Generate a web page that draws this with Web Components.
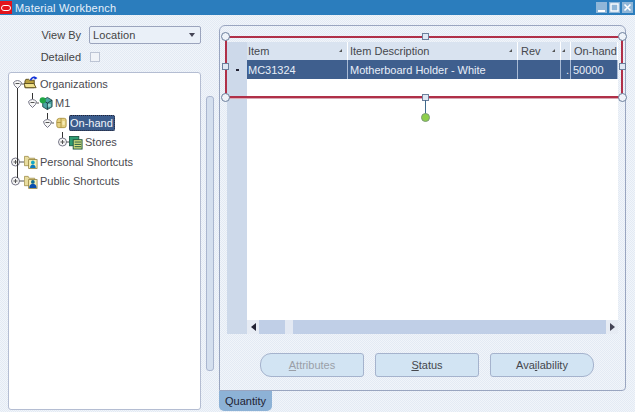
<!DOCTYPE html>
<html lang="en">
<head>
<meta charset="UTF-8">
<title>Material Workbench</title>
<style>
  html, body { margin: 0; background: #fff; }
  body { font: 11px "Liberation Sans", Arial, sans-serif; color: #444; }
</style>
</head>
<body>
<app-window>
  <title-bar slot="title">Material Workbench</title-bar>
  <side-pane slot="left"></side-pane>
  <tab-panel slot="right">
    <data-table></data-table>
    <button-row slot="buttons">
      <push-button shape="left" disabled><u>A</u>ttributes</push-button>
      <push-button><u>S</u>tatus</push-button>
      <push-button shape="right">Ava<u>i</u>lability</push-button>
    </button-row>
  </tab-panel>
</app-window>

<script>
  const DITHER = `background-color:#e9eff7;background-image:
    repeating-conic-gradient(#f1f5fa 0 25%, #e3eaf4 0 50%);background-size:2px 2px;`

  customElements.define("app-window", class extends HTMLElement {
    connectedCallback() {
      this.attachShadow({ mode: "open" }).innerHTML = `<style>
        :host { display: flex; flex-direction: column; width: 635px; height: 412px; ${DITHER} }
        .main { display: flex; flex: 1; min-height: 0; }
      </style>
      <slot name="title"></slot>
      <div class="main"><slot name="left"></slot><slot name="right"></slot></div>`
    }
  })

  customElements.define("title-bar", class extends HTMLElement {
    connectedCallback() {
      this.attachShadow({ mode: "open" }).innerHTML = `<style>
        :host { display: flex; align-items: center; height: 15px; background: #2b7dbd; color: #e6f0fa; font-size: 11px; }
        .logo { width: 12px; height: 13px; background: #e2141c; display: flex; align-items: center; justify-content: center; margin-right: 3px; }
        .logo i { width: 8px; height: 4px; border: 1px solid #fff; border-radius: 3px; }
        .text { flex: 1; letter-spacing: .2px; }
        .btns { display: flex; gap: 2px; margin-right: 2px; }
        .btns svg { display: block; }
      </style>
      <div class="logo"><i></i></div>
      <div class="text"><slot></slot></div>
      <div class="btns">
        <svg width="11" height="11"><rect width="11" height="11" fill="#8fb6d8"/><rect x="2" y="8" width="7" height="2" fill="#fff"/></svg>
        <svg width="11" height="11"><rect width="11" height="11" fill="#8fb6d8"/><rect x="2" y="2" width="7" height="7" fill="none" stroke="#fff" stroke-width="1.4"/></svg>
        <svg width="11" height="11"><rect width="11" height="11" fill="#8fb6d8"/><path d="M2.5 2.5l6 6M8.5 2.5l-6 6" stroke="#fff" stroke-width="1.6"/></svg>
      </div>`
    }
  })

  customElements.define("side-pane", class extends HTMLElement {
    connectedCallback() {
      this.attachShadow({ mode: "open" }).innerHTML = `<style>
        :host { display: block; width: 219px; flex: none; padding: 11px 0 2px 8px; box-sizing: border-box; }
        .form { display: grid; grid-template-columns: 73px 112px; column-gap: 8px; row-gap: 7px; align-items: center; height: 46px; align-content: start; }
        label { text-align: right; color: #444; }
        .select { height: 18px; box-sizing: border-box; border: 1px solid #9ba4bd; border-radius: 2px; background: #eaf0f8;
          display: flex; align-items: center; justify-content: space-between; padding: 0 5px 0 3px; letter-spacing: .1px; }
        .select::after { content: ""; border: 3.5px solid transparent; border-top: 4px solid #445; border-bottom: 0; }
        .check { width: 8px; height: 8px; border: 1px solid #bcc4d4; background: #f0f3f8; margin-left: 1px; }
        .row { display: flex; height: 338px; gap: 5px; }
        .tree { width: 193px; box-sizing: border-box; background: #fff; border: 1px solid #b4bdd2; border-radius: 3px; }
        .scroll { width: 6px; margin-top: 24px; height: 273px; background: #d4dfee; border: 1px solid #aab6cf; border-radius: 3px; }
      </style>
      <div class="form">
        <label>View By</label><div class="select">Location</div>
        <label>Detailed</label><div class="check"></div>
      </div>
      <div class="row">
        <div class="tree"><tree-view></tree-view></div>
        <div class="scroll"></div>
      </div>`
    }
  })

  const ICONS = {
    orgs: `<path d="M1 5l1-2h3l1 1h5v8H1z" fill="#b89f3e" stroke="#4f4214" stroke-width=".9"/><path d="M0 7.500h10.500l2.500 4.500H1.500z" fill="#efe08c" stroke="#4f4214" stroke-width=".9"/><path d="M7 4c1-3 4-4 6-2" fill="none" stroke="#1233d8" stroke-width="1.7"/><path d="M10.500 0l4 1.500-3 2z" fill="#1233d8"/>`,
    cube: `<path d="M4 4l5-3 5 3v7l-5 3-5-3z" fill="#4aa5a3" stroke="#173f40" stroke-width=".9"/><path d="M4 4l5 3 5-3M9 7v7" fill="none" stroke="#123234" stroke-width=".9"/><rect x="9.500" y="8" width="3" height="3" fill="#9ad6d0"/><circle cx="4" cy="4" r="3.300" fill="#1fa644"/>`,
    box: `<path d="M3 6q0-3 3-3h5q2 0 2 2v6q0 2-2 2H5q-2 0-2-2z" fill="#e6d183" stroke="#a88f3c" stroke-width=".9"/><path d="M7.500 3v10M3 7.500h4.500" stroke="#a88f3c" stroke-width=".9"/><path d="M9 6h2.500v4H9z" fill="#f6edb8"/>`,
    stores: `<rect x="0.500" y="1" width="10" height="10" fill="#2f9c72" stroke="#17513f" stroke-width=".9"/><rect x="4.500" y="4.500" width="9.500" height="10" fill="#d4e07e" stroke="#17513f"/><path d="M6 7h7M6 9.500h7M6 12h7" stroke="#17513f"/>`,
    personal: `<path d="M0.500 5V2h4l1 2h6v8H0.500z" fill="#e8dc9e" stroke="#9a8a45" stroke-width=".8"/><rect x="5" y="5.500" width="9" height="9.500" fill="#f6efb4" stroke="#8c7a35" stroke-width=".8"/><circle cx="9.500" cy="8.500" r="2" fill="#12a8c8"/><path d="M6.500 14.500c0-5 6-5 6 0z" fill="#0e7cc0"/>`,
    pub: `<path d="M0.500 5V2h4l1 2h6v8H0.500z" fill="#e8dc9e" stroke="#9a8a45" stroke-width=".8"/><rect x="5" y="5.500" width="9" height="9.500" fill="#f6efb4" stroke="#8c7a35" stroke-width=".8"/><circle cx="9.500" cy="8" r="2" fill="#0c6a90"/><path d="M5.500 14.500c0-6 8-6 8 0z" fill="#0a4fae"/>`
  }

  customElements.define("tree-node", class extends HTMLElement {
    connectedCallback() {
      const plus = this.hasAttribute("closed")
      const stem = this.hasAttribute("stem")
      const sel = this.hasAttribute("selected")
      const level = +this.getAttribute("level") || 0
      // top level closed folders hang 2px left of the trunk line
      const shift = plus && !level ? 2 : 0
      const knob = plus
        ? `<circle cx="5.500" cy="10" r="4" fill="#f6f6f6" stroke="#778"/><path d="M3.500 10h4M5.500 8v4" stroke="#555"/>`
        : `<path d="M1.500 8.500Q5.500 4.500 9.500 8.500Q9.500 11.500 5.500 14.500Q1.500 11.500 1.500 8.500z" fill="#f6f6f6" stroke="#778"/><path d="M3.500 9.500h4" stroke="#555"/>`
      this.attachShadow({ mode: "open" }).innerHTML = `<style>
        :host { display: flex; align-items: center; height: 19.500px; padding-left: ${level * 15 + 3 - shift}px; white-space: nowrap; color: #4a4a50; }
        svg { display: block; flex: none; }
        .icon { margin-right: 1px; }
        .label { padding: 2px 1px; }
        .sel { background: #3b5c8c; color: #f0f4fa; border-radius: 2px; outline: 1px dotted #223; outline-offset: -1px; padding: 2px 2px 2px 1px; }
      </style>
      <svg width="${12 + shift}" height="20" viewBox="0 0 ${12 + shift} 20">
        ${stem ? '<path d="M5.500 0v6" stroke="#333"/>' : ""}
        ${knob}
        <path d="M9.500 10H${12 + shift}" stroke="#555"/>
      </svg>
      <svg class="icon" width="14" height="15" viewBox="0 0 15 15">${ICONS[this.getAttribute("icon")]}</svg>
      <span class="label ${sel ? "sel" : ""}"><slot></slot></span>`
    }
  })

  customElements.define("tree-view", class extends HTMLElement {
    connectedCallback() {
      this.attachShadow({ mode: "open" }).innerHTML = `<style>
        :host { display: block; position: relative; padding-top: 1px; }
        .line { position: absolute; left: 8px; top: 15px; width: 1px; height: 90px; background: #333; }
      </style>
      <div class="line"></div>
      <tree-node icon="orgs">Organizations</tree-node>
      <tree-node icon="cube" level="1" stem>M1</tree-node>
      <tree-node icon="box" level="2" stem selected>On-hand</tree-node>
      <tree-node icon="stores" level="3" stem closed>Stores</tree-node>
      <tree-node icon="personal" closed>Personal Shortcuts</tree-node>
      <tree-node icon="pub" closed>Public Shortcuts</tree-node>`
    }
  })

  customElements.define("tab-panel", class extends HTMLElement {
    connectedCallback() {
      this.attachShadow({ mode: "open" }).innerHTML = `<style>
        :host { display: flex; flex-direction: column; width: 407px; flex: none; padding-top: 10px; box-sizing: border-box; }
        .box { flex: none; height: 366px; box-sizing: border-box; border: 1px solid #99a5c0; border-radius: 6px 6px 4px 0;
          padding: 16px 7px 0 7px; position: relative; }
        .tab { width: 53px; height: 20px; box-sizing: border-box; background: #8db2d6; color: #223; border-radius: 0 0 5px 5px;
          display: flex; align-items: center; justify-content: center; }
      </style>
      <div class="box">
        <slot></slot>
        <slot name="buttons"></slot>
        <selection-box></selection-box>
      </div>
      <div class="tab">Quantity</div>`
    }
  })

  customElements.define("button-row", class extends HTMLElement {
    connectedCallback() {
      this.attachShadow({ mode: "open" }).innerHTML = `<style>
        :host { display: flex; gap: 11px; justify-content: flex-start; padding: 19px 0 0 33px; }
      </style><slot></slot>`
    }
  })

  customElements.define("push-button", class extends HTMLElement {
    connectedCallback() {
      const shape = this.getAttribute("shape")
      const r = shape == "left" ? "11px 3px 3px 11px" : shape == "right" ? "3px 11px 11px 3px" : "3px"
      this.attachShadow({ mode: "open" }).innerHTML = `<style>
        :host { display: flex; align-items: center; justify-content: center; width: 104px; height: 24px; box-sizing: border-box;
          background: #d2e4f3; border: 1px solid #a5b3cd; border-radius: ${r};
          color: ${this.hasAttribute("disabled") ? "#9a9fa8" : "#45474d"}; }
      </style><slot></slot>`
    }
  })

  customElements.define("data-table", class extends HTMLElement {
    connectedCallback() {
      const cols = "20px 101px 170px 43px 10px 47px"
      this.attachShadow({ mode: "open" }).innerHTML = `<style>
        :host { display: block; width: 391px; height: 292px; position: relative; }
        .grid { display: grid; grid-template-columns: ${cols}; grid-template-rows: 18px 19px 241px 14px; height: 292px; background: #cdd9ea; }
        .h { background: #d9e3f0; border-right: 1px solid #fff; display: flex; align-items: center; padding-left: 2px; color: #45474d; position: relative; overflow: hidden; white-space: nowrap; }
        .h.sort::after { content: ""; position: absolute; right: 5px; top: 7px; border-left: 3px solid transparent; border-bottom: 3px solid #555; }
        .h.first, .c.first { padding-left: 1px; }
        .h.rev { padding-left: 3px; }
        .h.last { padding-left: 3px; }
        .c { background: #3f5f8e; color: #e8eef8; border-right: 1px solid #a8bad4; display: flex; align-items: center; padding-left: 2px; overflow: hidden; white-space: nowrap; }
        .rh { background: #cdd9ea; display: flex; align-items: center; justify-content: center; }
        .rh i { width: 3px; height: 2px; background: #223; }
        .corner { background: #cdd9ea; }
        .body { grid-column: 2 / -1; background: #fff; }
        .hs { grid-column: 2 / -1; background: #c0cfe7; display: flex; align-items: center; justify-content: space-between; }
        .arr { width: 12px; height: 14px; background: #e7ecf4; display: flex; align-items: center; justify-content: center; }
        .l { border-top: 4px solid transparent; border-bottom: 4px solid transparent; border-right: 5px solid #223; }
        .r { border-top: 4px solid transparent; border-bottom: 4px solid transparent; border-left: 5px solid #445; }
        .track { flex: 1; padding-left: 26px; }
        .thumb { width: 8px; height: 14px; background: #e3e9f3; }
      </style>
      <div class="grid">
        <div class="corner"></div>
        <div class="h sort first">Item</div>
        <div class="h sort">Item Description</div>
        <div class="h sort rev">Rev</div>
        <div class="h sort"></div>
        <div class="h last">On-hand</div>
        <div class="rh"><i></i></div>
        <div class="c first">MC31324</div>
        <div class="c">Motherboard Holder - White</div>
        <div class="c"></div>
        <div class="c" style="justify-content:flex-end;padding:0 1px 0 0">.</div>
        <div class="c">50000</div>
        <div class="corner"></div>
        <div class="body"></div>
        <div class="corner"></div>
        <div class="hs">
          <div class="arr"><div class="l"></div></div>
          <div class="track"><div class="thumb"></div></div>
          <div class="arr"><div class="r"></div></div>
        </div>
      </div>`
    }
  })

  // selection handles drawn on top of the table
  customElements.define("selection-box", class extends HTMLElement {
    connectedCallback() {
      this.attachShadow({ mode: "open" }).innerHTML = `<style>
        :host { position: absolute; left: 5px; top: 10px; width: 398px; height: 62px; border: 2px solid #b03048; box-sizing: border-box; box-shadow: 0 1px 0 #d9a8b4; pointer-events: none; }
        i { position: absolute; width: 7px; height: 7px; box-sizing: border-box; background: #dfe8f4; border: 1px solid #6c7f9c; }
        .o { width: 9px; height: 9px; border-radius: 50%; background: #eef3f9; }
        .stem { position: absolute; left: 198px; top: 62px; width: 1px; height: 14px; background: #3f6a8c; }
        .g { position: absolute; left: 194px; top: 75px; width: 9px; height: 9px; border-radius: 50%; background: #8ed04a; border: 1px solid #7d9a7a; box-sizing: border-box; }
      </style>
      <i class="o" style="left:-6px;top:-6px"></i>
      <i style="left:195px;top:-5px"></i>
      <i class="o" style="right:-6px;top:-6px"></i>
      <i style="left:-5px;top:25px"></i>
      <i style="right:-5px;top:25px"></i>
      <i class="o" style="left:-6px;bottom:-6px"></i>
      <i style="left:195px;bottom:-5px"></i>
      <i class="o" style="right:-6px;bottom:-6px"></i>
      <div class="stem"></div>
      <div class="g"></div>`
    }
  })
</script>
</body>
</html>
